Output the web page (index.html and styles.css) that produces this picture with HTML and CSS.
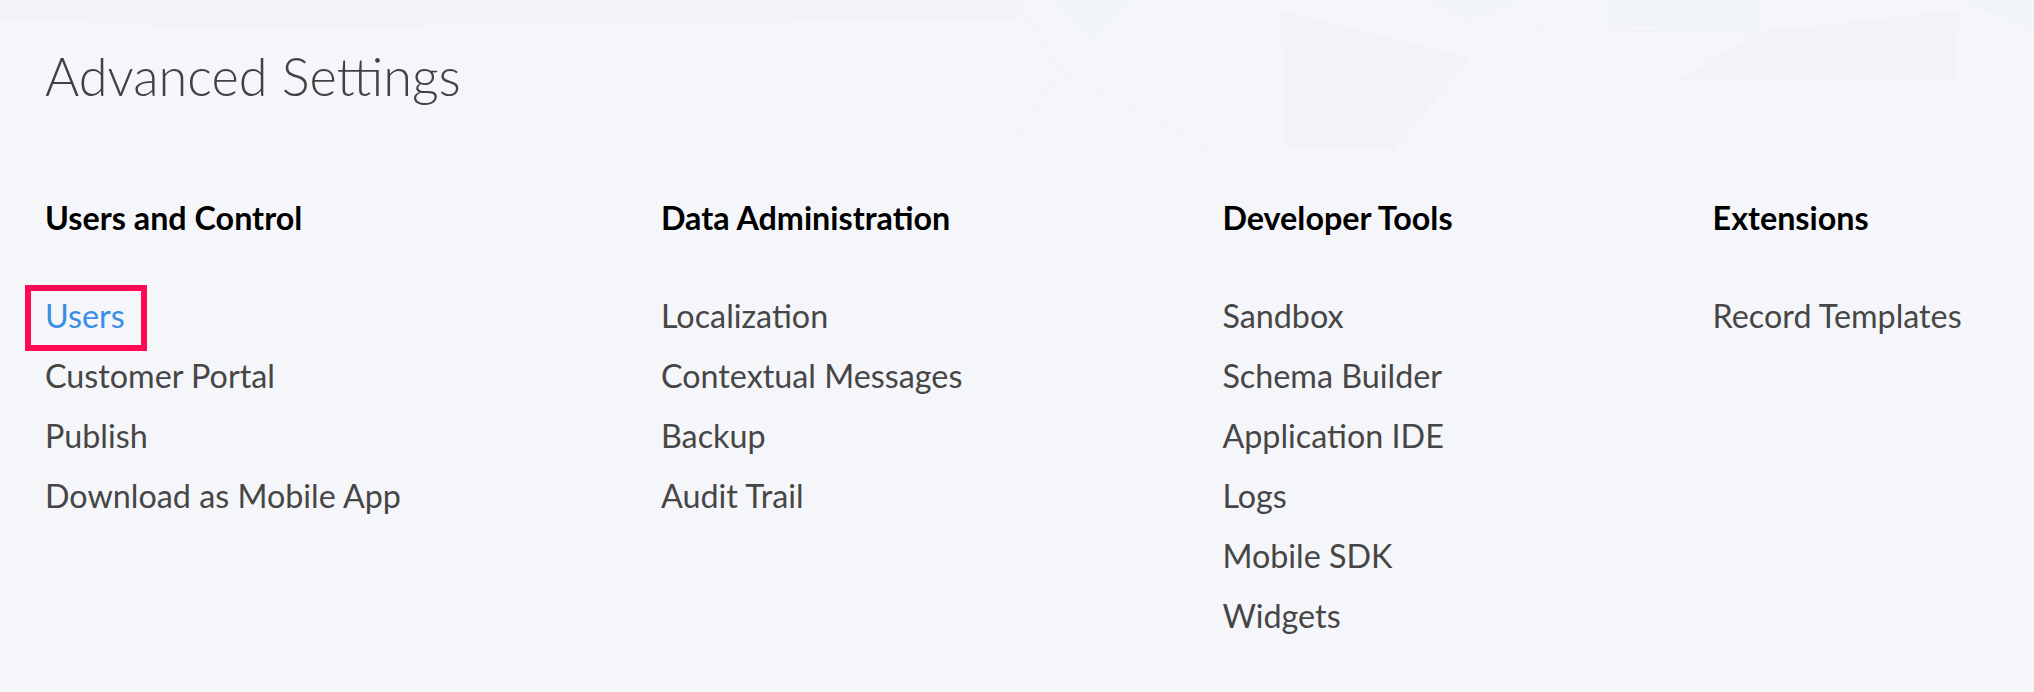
FILE: index.html
```html
<!DOCTYPE html>
<html lang="en">
<head>
<meta charset="utf-8">
<title>Advanced Settings</title>
<link rel="stylesheet" href="styles.css">
</head>
<body>
<main class="page">
  <h1 class="title">Advanced Settings</h1>
  <div class="columns">
    <section class="col">
      <h2 class="col-title">Users and Control</h2>
      <ul class="links">
        <li><a class="link link-active" href="#">Users</a></li>
        <li><a class="link" href="#">Customer Portal</a></li>
        <li><a class="link" href="#">Publish</a></li>
        <li><a class="link" href="#">Download as Mobile App</a></li>
      </ul>
    </section>
    <section class="col">
      <h2 class="col-title">Data Administration</h2>
      <ul class="links">
        <li><a class="link" href="#">Localization</a></li>
        <li><a class="link" href="#">Contextual Messages</a></li>
        <li><a class="link" href="#">Backup</a></li>
        <li><a class="link" href="#">Audit Trail</a></li>
      </ul>
    </section>
    <section class="col">
      <h2 class="col-title">Developer Tools</h2>
      <ul class="links">
        <li><a class="link" href="#">Sandbox</a></li>
        <li><a class="link" href="#">Schema Builder</a></li>
        <li><a class="link" href="#">Application IDE</a></li>
        <li><a class="link" href="#">Logs</a></li>
        <li><a class="link" href="#">Mobile SDK</a></li>
        <li><a class="link" href="#">Widgets</a></li>
      </ul>
    </section>
    <section class="col">
      <h2 class="col-title">Extensions</h2>
      <ul class="links">
        <li><a class="link" href="#">Record Templates</a></li>
      </ul>
    </section>
  </div>
</main>
</body>
</html>
```
FILE: styles.css
```css
html, body {
  margin: 0;
  padding: 0;
}
body {
  background-color: #f5f6fa;
  background-image: url("data:image/svg+xml;utf8,<svg xmlns='http://www.w3.org/2000/svg' width='2034' height='200' viewBox='0 0 2034 200'><g fill='none' stroke='%23f0f2f6' stroke-width='1.2'><path d='M1017 0 L1059 70 L1276 10'/><path d='M1059 70 L1211 150'/><path d='M1017 137 L1059 70'/><path d='M1500 30 L1760 32 L2000 10'/><path d='M1760 32 L1680 80'/><path d='M1950 15 L1880 80'/></g><g fill='%23f2f3f7'><polygon points='1280,10 1471,57 1393,150 1286,147'/><polygon points='1760,32 1960,10 1955,80 1680,80'/><polygon points='0,0 1017,0 1017,20 200,28 0,18'/></g><g fill='%23f1f4f8'><polygon points='1050,0 1130,0 1090,40'/><polygon points='1430,0 1520,0 1470,20'/><polygon points='1610,0 1760,0 1760,30 1610,25'/><polygon points='1960,0 2034,0 2034,30'/></g></svg>");
  background-repeat: no-repeat;
  background-position: 0 0;
  font-family: Lato, "Open Sans", "Liberation Sans", sans-serif;
  min-height: 692px;
}
.page {
  padding: 45px 0 0 45px;
}
.title {
  margin: 0 0 81px;
  font-family: Lato, sans-serif;
  font-weight: 300;
  font-size: 52.3px;
  line-height: 62px;
  color: #424242;
}
.columns {
  display: flex;
  gap: 260px;
  align-items: flex-start;
}
.col-title {
  margin: 0 0 38px;
  font-weight: 700;
  font-size: 32.3px;
  line-height: 60px;
  color: #000;
  white-space: nowrap;
}
.links {
  list-style: none;
  margin: 0;
  padding: 0;
}
.links li {
  font-size: 32.3px;
  line-height: 60px;
  white-space: nowrap;
}
.link {
  color: #464646;
  text-decoration: none;
}
.link-active {
  position: relative;
  display: inline-block;
  color: #3a8ee5;
}
.link-active::after {
  content: "";
  position: absolute;
  left: -20px;
  right: -22px;
  top: -1px;
  bottom: -5px;
  border: 6px solid #ff0a54;
}
```
